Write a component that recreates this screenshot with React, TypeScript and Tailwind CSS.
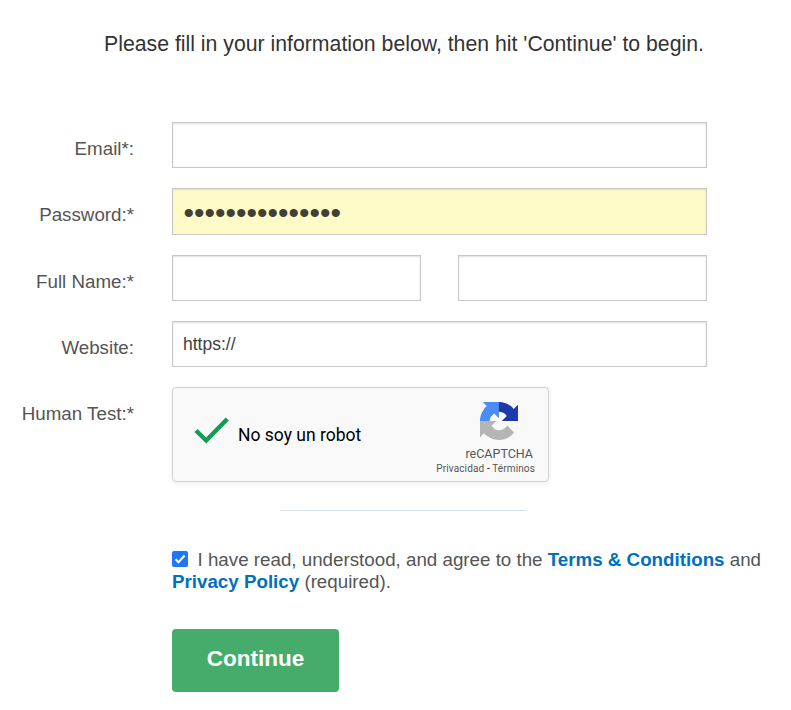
import type { ReactNode } from 'react';

const inputBase =
  'block border border-[#c8c8c8] bg-white px-[10px] text-[#404040] text-[17.5px] outline-none shadow-[inset_0_1px_2px_rgba(0,0,0,0.12)]';

function Row({ label, className, children }: { label: string; className: string; children: ReactNode }) {
  return (
    <div className={`flex items-start ${className}`}>
      <div className="w-[134px] shrink-0 whitespace-nowrap pt-[16px] text-right leading-[22px]">{label}</div>
      <div className="ml-[38px] flex">{children}</div>
    </div>
  );
}

function RecaptchaLogo() {
  return (
    <svg viewBox="0 0 64 64" className="h-[38px] w-[38px]">
      <path fill="#1c3aa9" d="M64 31.955l-.033-1.37V4.687l-7.16 7.16C50.948 4.674 42.033.093 32.05.093c-10.4 0-19.622 4.96-25.458 12.64l11.736 11.86a15.55 15.55 0 0 1 4.754-5.334c2.05-1.6 4.952-2.906 8.968-2.906.485 0 .86.057 1.135.163 4.976.393 9.288 3.14 11.828 7.124l-8.307 8.307L64 31.953" />
      <path fill="#4a8df8" d="M31.862.094l-1.37.033H4.594l7.16 7.16C4.58 13.147 0 22.06 0 32.046c0 10.4 4.96 19.622 12.64 25.458L24.5 45.768a15.55 15.55 0 0 1-5.334-4.754c-1.6-2.05-2.906-4.952-2.906-8.968 0-.485.057-.86.163-1.135.393-4.976 3.14-9.288 7.124-11.828l8.307 8.307L31.86.095" />
      <path fill="#b5b5b5" d="M.001 32.045l.033 1.37v25.898l7.16-7.16c5.86 7.173 14.774 11.754 24.76 11.754 10.4 0 19.622-4.96 25.458-12.64l-11.736-11.86a15.55 15.55 0 0 1-4.754 5.334c-2.05 1.6-4.952 2.906-8.968 2.906-.485 0-.86-.057-1.135-.163-4.976-.393-9.288-3.14-11.828-7.124l8.307-8.307c-10.522.04-22.4.066-27.295-.005" />
    </svg>
  );
}

function Recaptcha() {
  return (
    <div className="flex h-[95px] w-[377px] rounded-[4px] border border-[#d3d3d3] bg-[#f9f9f9] font-['Roboto',sans-serif] text-black shadow-[0_1px_5px_0_rgba(0,0,0,0.08)]">
      <svg viewBox="0 0 36 28" className="ml-[21px] mt-[27.5px] h-[28px] w-[36px] shrink-0">
        <path d="M2 14.5 L12.2 24.5 L33.3 3" fill="none" stroke="#0f9d58" strokeWidth="4.4" />
      </svg>
      <div className="ml-[8px] mt-[36px] w-[150px] whitespace-nowrap text-[17.5px] leading-[22px]">No soy un robot</div>
      <div className="ml-auto mr-[13px] flex flex-col items-end pt-[14px] text-[#555]">
        <div className="mr-[17px]">
          <RecaptchaLogo />
        </div>
        <div className="mr-[2px] mt-[6px] text-[12.5px] leading-[16px]">reCAPTCHA</div>
        <div className="whitespace-nowrap text-[10px] leading-[14px] tracking-[0.13px]">
          Privacidad <span className="text-black">-</span> Términos
        </div>
      </div>
    </div>
  );
}

export default function App() {
  return (
    <main className="h-[710px] w-[791px] overflow-hidden bg-white font-['Liberation_Sans',Arial,sans-serif] text-[18.75px] text-[#555]">
      <h1 className="ml-[104px] whitespace-nowrap pt-[31px] text-[21.25px] leading-[26px] text-[#333]">
        Please fill in your information below, then hit 'Continue' to begin.
      </h1>
      <form className="mt-[65px]">
        <Row label="Email*:" className="h-[66px]">
          <input className={`${inputBase} h-[46px] w-[535px]`} />
        </Row>
        <Row label="Password:*" className="h-[67px]">
          <input
            type="password"
            defaultValue="correcthorse123"
            className="block h-[47px] w-[535px] border border-[#c8c8c8] bg-[#fffbc8] pl-[10.5px] pr-[10px] pt-[2px] text-[30px] text-[#404035] shadow-[inset_0_1px_2px_rgba(0,0,0,0.12)] outline-none"
          />
        </Row>
        <Row label="Full Name:*" className="h-[66px]">
          <input className={`${inputBase} h-[46px] w-[249px]`} />
          <input className={`${inputBase} ml-[37px] h-[46px] w-[249px]`} />
        </Row>
        <Row label="Website:" className="h-[66px]">
          <input defaultValue="https://" className={`${inputBase} h-[46px] w-[535px]`} />
        </Row>
        <Row label="Human Test:*" className="h-[95px]">
          <Recaptcha />
        </Row>
        <div className="ml-[280px] mt-[28px] h-px w-[247px] bg-[#dae1e7]" />
        <div className="ml-[172px] mt-[38px] whitespace-nowrap leading-[22px]">
          <div className="flex">
            <span className="mr-[9.5px] mt-[1.5px] flex h-4 w-4 rounded-[2px] bg-[#1f75fe]">
              <svg viewBox="0 0 16 16" className="h-4 w-4">
                <path d="M3.5 8.3 L6.5 11.2 L12.6 4.5" fill="none" stroke="white" strokeWidth="2" />
              </svg>
            </span>
            <span>
              I have read, understood, and agree to the <b className="text-[#006fc0]">Terms &amp; Conditions</b> and
            </span>
          </div>
          <div>
            <b className="text-[#006fc0]">Privacy Policy</b> (required).
          </div>
        </div>
        <button type="button" className="ml-[172px] mt-[36px] block h-[63px] w-[167px] rounded-[4px] bg-[#45ac6b] pb-[3px] text-[22.5px] font-bold text-white">
          Continue
        </button>
      </form>
    </main>
  );
}
